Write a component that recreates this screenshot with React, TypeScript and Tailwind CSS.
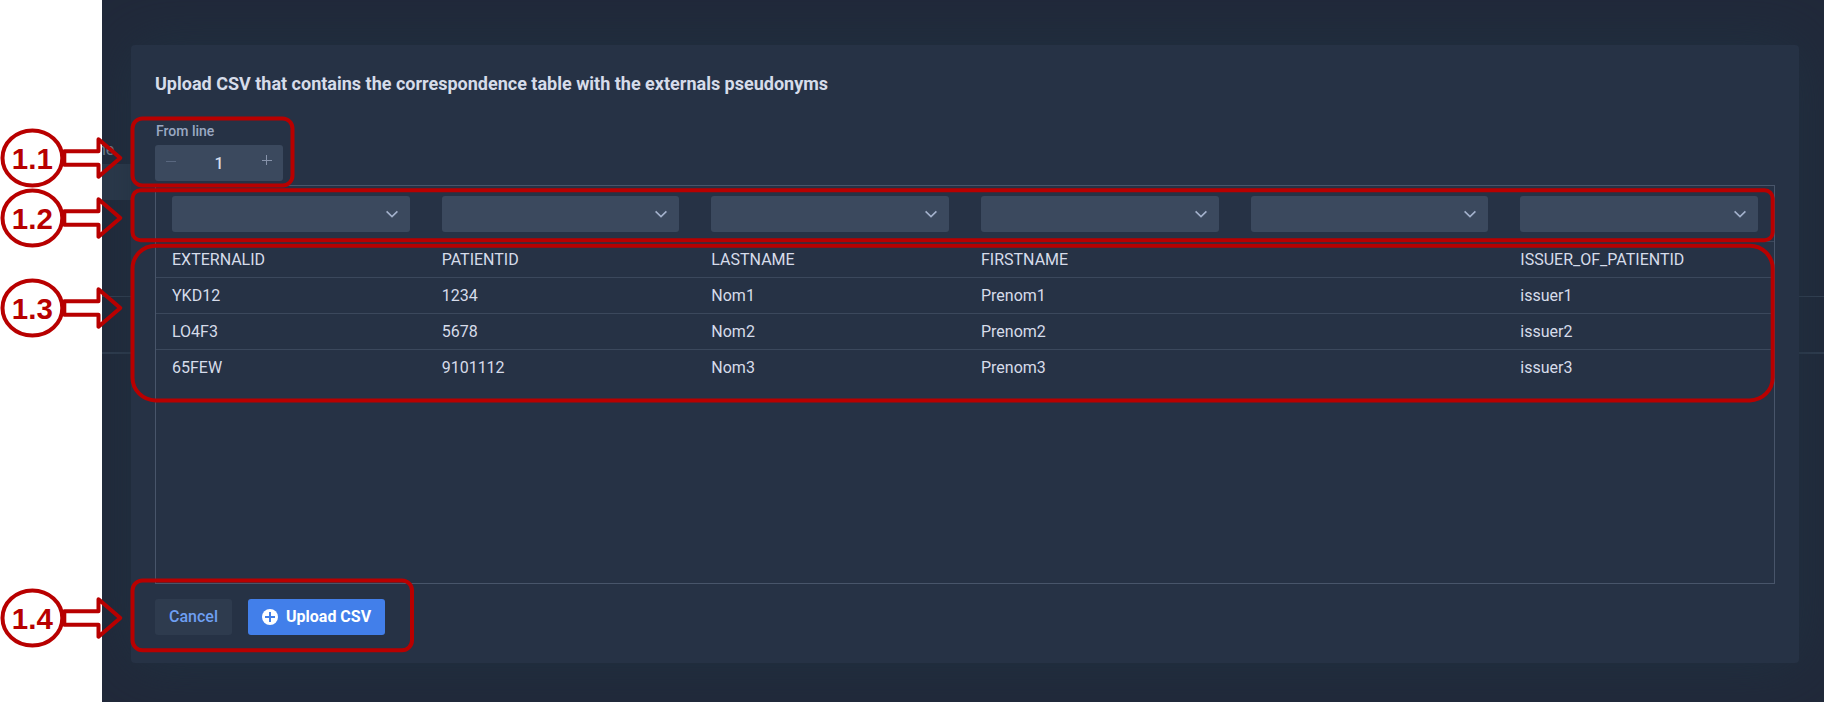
import React from "react";

const columns = ["EXTERNALID", "PATIENTID", "LASTNAME", "FIRSTNAME", "", "ISSUER_OF_PATIENTID"];
const rows = [
  columns,
  ["YKD12", "1234", "Nom1", "Prenom1", "", "issuer1"],
  ["LO4F3", "5678", "Nom2", "Prenom2", "", "issuer2"],
  ["65FEW", "9101112", "Nom3", "Prenom3", "", "issuer3"],
];

function Select() {
  return (
    <button className="flex h-9 w-full items-center justify-end rounded-[3px] bg-[#3b495e] pr-3">
      <svg width="12" height="12" viewBox="0 0 12 12" fill="none" stroke="#a3b1cc" strokeWidth="1.6">
        <path d="M0.6 3.4 L6 8.6 L11.4 3.4" />
      </svg>
    </button>
  );
}

function Stepper() {
  return (
    <div className="flex h-9 w-32 items-center justify-between rounded-[3px] bg-[#3b495e] px-[11px]">
      <svg width="10" height="10" viewBox="0 0 10 10" className="-mt-1" stroke="#59677f" strokeWidth="1">
        <path d="M0 5.5H10" />
      </svg>
      <span className="pt-0.5 text-base font-medium text-[#d6dcea]">1</span>
      <svg width="10" height="10" viewBox="0 0 10 10" className="-mt-1.5" stroke="#8793aa" strokeWidth="1">
        <path d="M0 5.5H10M4.5 0V10" />
      </svg>
    </div>
  );
}

const callouts = [
  { label: "1.1", y: 158 },
  { label: "1.2", y: 218 },
  { label: "1.3", y: 308 },
  { label: "1.4", y: 618 },
];

function Annotations() {
  return (
    <svg
      className="pointer-events-none absolute left-0 top-0"
      width="1824"
      height="703"
      fill="none"
      stroke="#b80000"
      strokeWidth="4"
    >
      <rect x="132.5" y="118.5" width="160" height="67" rx="10" />
      <rect x="132.5" y="190.3" width="1640.2" height="50" rx="8" />
      <rect x="132.5" y="245.7" width="1640.2" height="154.7" rx="23" />
      <rect x="132.5" y="580.5" width="279.5" height="69.8" rx="10" />
      {callouts.map(({ label, y }) => (
        <g key={label} transform={`translate(0 ${y})`}>
          <ellipse cx="32.4" cy="0" rx="29.9" ry="27.6" />
          <path d="M64.3 -6.7H98.5V-18.7L120.3 0L98.5 18.7V6.7H64.3Z" strokeLinejoin="round" />
          <text
            x="32.3"
            y="11"
            textAnchor="middle"
            fill="#b80000"
            stroke="none"
            className="font-['Liberation_Sans',sans-serif] text-[29.5px] font-bold"
          >
            {label}
          </text>
        </g>
      ))}
    </svg>
  );
}

export default function App() {
  return (
    <div className="relative flex h-[703px] w-[1824px] overflow-hidden bg-white font-[Roboto,sans-serif] text-base text-[#d6dcea]">
      <div className="relative ml-[102px] h-[702px] w-[1722px] overflow-hidden bg-[#21293a] pl-[29px] pt-[45px]">
        <div className="absolute left-0 top-0 w-full">
          <div className="-ml-[5px] h-[164px] pt-[138px] text-base leading-6 text-[#7b8595]">ne</div>
          <div className="h-9 w-[200px] bg-[#2d394b]" />
          <div className="mt-24 h-px bg-[#364254]" />
          <div className="mt-[55px] h-0.5 bg-[#313d4f]" />
        </div>
        <div className="relative flex h-[618px] w-[1668px] flex-col rounded-[4px] bg-[#263245] px-6 shadow-[0_0_60px_rgba(32,50,66,0.85)]">
          <h1 className="pt-[25px] text-lg font-bold leading-[27px]">
            Upload CSV that contains the correspondence table with the externals pseudonyms
          </h1>
          <label className="ml-px mt-[24px] h-6 text-sm font-medium leading-5 text-[#9aa8c2]">From line</label>
          <Stepper />
          <div className="mt-1 h-[399px] w-[1620px] shrink-0 border border-[#48556a]">
            <div className="grid h-14 grid-cols-6 border-b border-[#3b485c]">
              {columns.map((_, i) => (
                <div key={i} className="px-4 pt-[10px]">
                  <Select />
                </div>
              ))}
            </div>
            {rows.map((row, r) => (
              <div key={r} className="grid h-9 grid-cols-6 border-b border-[#3b485c] leading-[35px] last:border-b-0">
                {row.map((cell, i) => (
                  <div key={i} className="px-4">
                    {cell}
                  </div>
                ))}
              </div>
            ))}
          </div>
          <div className="mt-[15px] flex gap-4 font-medium">
            <button className="h-9 w-[77px] rounded-[3px] bg-[#2e3b4e] text-[#6e9ff2]">Cancel</button>
            <button className="flex h-9 w-[137px] items-center rounded-[3px] bg-[#427fea] pl-[14px] font-bold text-white">
              <svg width="16" height="16" viewBox="0 0 16 16" className="mr-2">
                <circle cx="8" cy="8" r="8" fill="#fff" />
                <path d="M3 8H13M8 3V13" stroke="#427fea" strokeWidth="2" />
              </svg>
              Upload CSV
            </button>
          </div>
        </div>
      </div>
      <Annotations />
    </div>
  );
}
